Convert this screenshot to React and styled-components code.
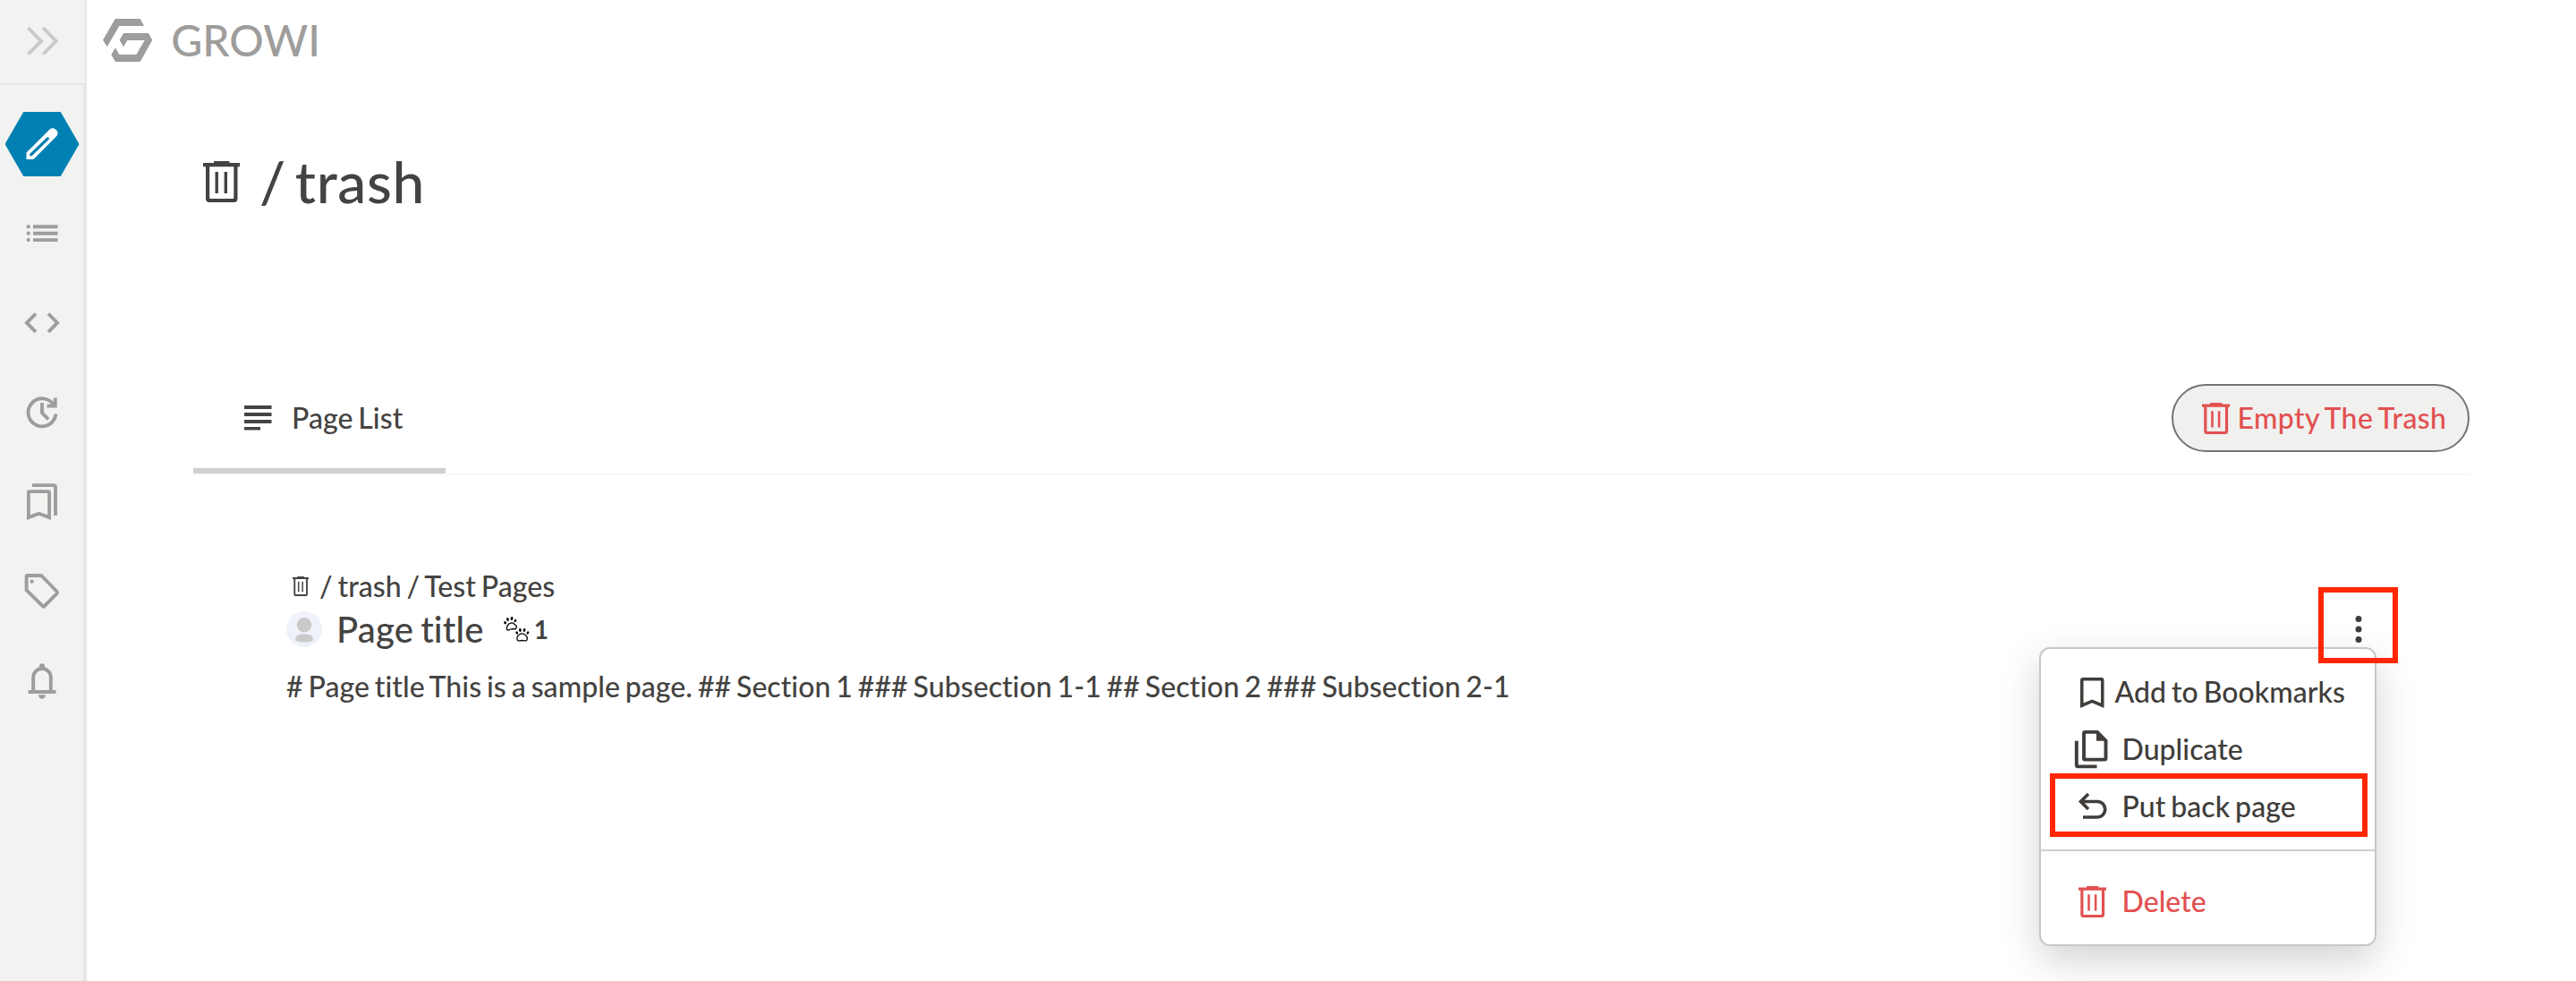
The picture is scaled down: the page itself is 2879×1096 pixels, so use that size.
import React from "react";
import styled, { createGlobalStyle } from "styled-components";

const Global = createGlobalStyle`
  * { box-sizing: border-box; }
  body { margin: 0; background: #fff; }
  svg { display: block; flex: none; }
`;

const ink = "#444341";
const gray = "#9e9d9b";
const danger = "#e25050";

const Shell = styled.div`
  position: relative;
  display: flex;
  height: 1096px;
  overflow: hidden;
  font-family: Lato, "Liberation Sans", sans-serif;
  font-size: 32px;
  font-weight: 500;
  font-variant-ligatures: none;
  line-height: 48px;
  letter-spacing: 0.045px;
  word-spacing: -2.2px;
  color: ${ink};
  white-space: nowrap;
`;

const Sidebar = styled.aside`
  width: 97px;
  display: flex;
  flex-direction: column;
  background: #f2f2f0;
  color: ${gray};
`;

const SidebarToggle = styled.button`
  height: 93px;
  padding: 0 2px 2px 0;
  border: 0;
  border-right: 2px solid #e7e7e5;
  background: transparent;
  display: grid;
  place-items: center;
  color: #c9c9c7;
`;

const SidebarNav = styled.nav`
  flex: 1;
  border-top: 2px solid #e7e7e5;
  border-right: 4px solid #e7e7e5;
  padding-top: 16px;
  display: flex;
  flex-direction: column;
`;

const NavItem = styled.a`
  height: 100px;
  padding-left: 1px;
  display: grid;
  place-items: center;
`;

const Hexagon = styled.span`
  width: 83px;
  height: 72px;
  background: #0080b3;
  clip-path: polygon(25% 0, 75% 0, 100% 50%, 75% 100%, 25% 100%, 0 50%);
  display: grid;
  place-items: center;
  color: #fff;
`;

const Main = styled.main`
  flex: 1;
  display: flex;
  flex-direction: column;
`;

const Brand = styled.header`
  height: 89px;
  padding-left: 18px;
  display: flex;
  align-items: center;
  gap: 21px;
  font-size: 48px;
  color: ${gray};
`;

const Content = styled.div`
  width: 2544px;
  margin-left: 119px;
`;

const Title = styled.h1`
  margin: 69px 0 0;
  height: 90px;
  padding-left: 11px;
  display: flex;
  align-items: center;
  font-size: 64px;
  font-weight: 500;
  letter-spacing: 0.7px;
  line-height: 90px;
`;

const TitlePath = styled.span`
  margin-left: 22px;
  display: flex;
  gap: 10px;
`;

const Tabs = styled.div`
  margin-top: 156px;
  height: 127px;
  border-bottom: 2px solid #f8f8f8;
  display: flex;
  justify-content: space-between;
  align-items: flex-start;
`;

const Tab = styled.div`
  width: 282px;
  height: 125px;
  padding: 7px 0 0 57px;
  border-bottom: 6px solid #cfcfcd;
  display: flex;
  align-items: center;
  gap: 22px;
`;

const EmptyButton = styled.button`
  margin-top: 25px;
  width: 333px;
  height: 76px;
  padding: 0 0 0 32px;
  border: 2px solid #737371;
  border-radius: 38px;
  background: #f0f0ee;
  color: ${danger};
  font: inherit;
  letter-spacing: 0.4px;
  word-spacing: -2.2px;
  display: flex;
  align-items: center;
  gap: 8.5px;
`;

const PageItem = styled.article`
  margin: 100px 0 0 104px;
  width: 2340px;
`;

const Breadcrumb = styled.div`
  height: 48px;
  padding-left: 7px;
  display: flex;
  align-items: center;
  gap: 12px;
`;

const ItemRow = styled.div`
  height: 48px;
  display: flex;
  align-items: center;
`;

const ItemTitle = styled.span`
  margin-left: 16px;
  font-size: 40px;
  letter-spacing: 0.2px;
`;

const Seen = styled.span`
  margin-left: 22px;
  display: flex;
  align-items: center;
  gap: 5px;
  font-size: 28px;
  font-weight: 700;
`;

const MoreButton = styled.button`
  margin-left: auto;
  width: 48px;
  height: 48px;
  padding: 0;
  border: 0;
  background: transparent;
  color: #403d3a;
  display: grid;
  place-items: center;
`;

const Snippet = styled.p`
  margin: 16px 0 0;
`;

const Menu = styled.div`
  position: absolute;
  left: 2279px;
  top: 723px;
  width: 377px;
  height: 334px;
  padding: 16px 0;
  border: 2px solid #c7c7c6;
  border-radius: 12px;
  background: #fff;
  box-shadow: 0 16px 44px rgba(0, 0, 0, 0.175);
  color: #403d3a;
`;

const MenuItem = styled.div`
  height: 64px;
  padding-left: 36px;
  display: flex;
  align-items: center;
  color: ${(p) => (p.$danger ? danger : "inherit")};
`;

const MenuIcon = styled.span`
  width: ${(p) => p.$width || 54.5}px;
  padding-left: ${(p) => p.$inset || 0}px;
  display: flex;
  align-items: center;
`;

const Divider = styled.hr`
  margin: 16px 0 24px;
  border: 0;
  height: 2px;
  background: #cfcfcd;
`;

const Highlight = styled.div`
  position: absolute;
  left: ${(p) => p.$x}px;
  top: ${(p) => p.$y}px;
  width: ${(p) => p.$w}px;
  height: ${(p) => p.$h}px;
  border: 6px solid #ff2600;
`;

const Icon = ({ children, size = 48 }) => (
  <svg width={size} height={size} viewBox="0 0 48 48" fill="none" stroke="currentColor" strokeWidth="3.9">
    {children}
  </svg>
);

const Trash = ({ width, height }) => (
  <svg width={width} height={height} viewBox="0 0 41 46" preserveAspectRatio="none" fill="currentColor">
    <path d="M12 0H29.500V2H41V6.300H38.500V42Q38.500 46 34.500 46H7Q3 46 3 42V6.300H0V2H12ZM7.200 6.300V41Q7.200 41.900 8.100 41.900H33.400Q34.300 41.900 34.300 41V6.300Z" fillRule="evenodd" />
    <path d="M13.500 12H16.900V36H13.500ZM23.600 12H27V36H23.600Z" />
  </svg>
);

const Logo = () => (
  <svg width="55.300" height="48" viewBox="346 63 166 144" fill="currentColor">
    <path d="M387 63H471L484 87H401L360 157L346 134Z" />
    <path d="M415 111H499L512 134L471 207H388L374 183L388 160L401 183H458L486 135H428L415 157L402 134Z" />
  </svg>
);

const Pencil = () => (
  <svg width="36" height="36" viewBox="0 0 36 36" fill="currentColor">
    <path fillRule="evenodd" d="M.500 35V27.500L26.600 1.500Q29.800-1.200 33 1.500L34.300 2.800Q37 5.800 34.300 9L8.500 35ZM4.200 31.200H6.600L26.400 11.900L24.300 9.800L4.200 29Z" />
  </svg>
);

const Paws = () => (
  <svg width="29" height="28" viewBox="0 0 29 28" fill="#000">
    <path d="M3.300 12.600Q4 8 8 7.100Q10.500 6.300 12.300 8.800Q15.600 10.600 13.700 13.200Q12.800 14 10 13.600Q7.500 13.600 5.500 15Q3 15.200 3.300 12.600Z" fill="none" stroke="#000" strokeWidth="1.300" />
    <ellipse cx="1.500" cy="6.700" rx="1.300" ry="1.700" transform="rotate(-25 1.500 6.700)" />
    <ellipse cx="4.400" cy="3" rx="1.400" ry="2" transform="rotate(-12 4.400 3)" />
    <ellipse cx="9" cy="2" rx="1.400" ry="2" transform="rotate(8 9 2)" />
    <ellipse cx="12.900" cy="4.500" rx="1.300" ry="1.800" transform="rotate(28 12.900 4.500)" />
    <path d="M15 25Q14.500 21.500 17.500 20Q20.500 17.800 23.500 20Q26.500 21.500 26.300 25Q26 27.500 23.200 26.800Q20.500 26.200 18 26.800Q15.200 27.300 15 25Z" fill="none" stroke="#000" strokeWidth="1.300" />
    <ellipse cx="14.700" cy="18" rx="1.300" ry="1.700" transform="rotate(-28 14.700 18)" />
    <ellipse cx="18.300" cy="14.900" rx="1.400" ry="2" transform="rotate(-8 18.300 14.900)" />
    <ellipse cx="23" cy="14.900" rx="1.400" ry="2" transform="rotate(10 23 14.900)" />
    <ellipse cx="26.900" cy="18" rx="1.300" ry="1.700" transform="rotate(28 26.900 18)" />
  </svg>
);

const Avatar = () => (
  <svg width="40" height="40" viewBox="0 0 40 40">
    <circle cx="20" cy="20" r="20" fill="#eff3f9" />
    <circle cx="20" cy="15.200" r="8.200" fill="#c9c9c9" />
    <path d="M10 31.500Q10 25.200 20 25.200T30 31.500Q30 34.500 20 34.500T10 31.500Z" fill="#c9c9c9" />
  </svg>
);

const navIcons = [
  <Icon key="list">
    <path d="M14 16.200H41.500M14 23.700H41.500M14 31.100H41.500" />
    <g fill="currentColor" stroke="none">
      <circle cx="8.700" cy="16.200" r="2.100" />
      <circle cx="8.700" cy="23.700" r="2.100" />
      <circle cx="8.700" cy="31.100" r="2.100" />
    </g>
  </Icon>,
  <Icon key="code">
    <path d="M17 13.500L6.900 23.700L17 33.900M31 13.500L41.100 23.700L31 33.900" />
  </Icon>,
  <Icon key="recent">
    <path d="M39.400 25.500A15.500 15.500 0 1 1 37.500 16.200" />
    <path d="M38.800 7.500V16.500H29.500M24 13V24.300L31 31.300" />
  </Icon>,
  <Icon key="bookmarks">
    <path d="M13 5.100H37A2 2 0 0 1 39 7.100V39" />
    <path stroke="none" fill="currentColor" fillRule="evenodd" d="M7 44V13.300Q7 10.300 10 10.300H31Q34 10.300 34 13.300V44L20.500 38.800ZM10.800 38.300L20.500 34.700L30.200 38.300V14.100H10.800Z" />
  </Icon>,
  <Icon key="tag">
    <path strokeLinejoin="round" d="M6.600 7Q6.600 6 7.600 6H23.300L40.700 24Q41.400 25 40.700 26L26.600 40.200Q25.700 41 24.800 40.200L6.600 22.300Z" />
    <circle cx="12.700" cy="12.700" r="2.100" fill="currentColor" stroke="none" />
  </Icon>,
  <Icon key="bell">
    <path d="M8.600 36H39.500M14.200 36V19.800A9.800 9.800 0 0 1 33.800 19.800V36" />
    <path stroke="none" fill="currentColor" d="M21 10V7.300A3 3 0 0 1 27 7.300V10ZM20 39.200H28A4 4.600 0 0 1 20 39.200Z" />
  </Icon>,
];

export default function App() {
  return (
    <Shell>
      <Global />
      <Sidebar>
        <SidebarToggle>
          <Icon>
            <path d="M8.500 9.200L23 23.900L8.500 38.500M25.200 9.200L39.700 23.900L25.200 38.500" />
          </Icon>
        </SidebarToggle>
        <SidebarNav>
          <NavItem>
            <Hexagon><Pencil /></Hexagon>
          </NavItem>
          {navIcons.map((icon) => <NavItem key={icon.key}>{icon}</NavItem>)}
        </SidebarNav>
      </Sidebar>
      <Main>
        <Brand><Logo />GROWI</Brand>
        <Content>
          <Title>
            <Trash width={41} height={46} />
            <TitlePath><span>/</span><span>trash</span></TitlePath>
          </Title>
          <Tabs>
            <Tab>
              <svg width="31" height="28" viewBox="0 0 31 28" fill="currentColor">
                <path d="M0 0H30.500V4H0ZM0 8H30.500V12H0ZM0 16H30.500V20H0ZM0 24H18V27.500H0Z" />
              </svg>
              Page List
            </Tab>
            <EmptyButton><Trash width={31} height={35} />Empty The Trash</EmptyButton>
          </Tabs>
          <PageItem>
            <Breadcrumb><Trash width={18} height={22} />/ trash / Test Pages</Breadcrumb>
            <ItemRow>
              <Avatar />
              <ItemTitle>Page title</ItemTitle>
              <Seen><Paws />1</Seen>
              <MoreButton>
                <svg width="8" height="32" viewBox="0 0 8 32" fill="currentColor">
                  <circle cx="4" cy="4.500" r="3.500" />
                  <circle cx="4" cy="16" r="3.500" />
                  <circle cx="4" cy="27.500" r="3.500" />
                </svg>
              </MoreButton>
            </ItemRow>
            <Snippet># Page title This is a sample page. ## Section 1 ### Subsection 1-1 ## Section 2 ### Subsection 2-1</Snippet>
          </PageItem>
        </Content>
      </Main>
      <Menu>
        <MenuItem>
          <MenuIcon $width={46.5}>
            <svg width="36" height="36" viewBox="0 0 36 36" fill="currentColor">
              <path fillRule="evenodd" d="M8 36V5Q8 2 11 2H31.500Q34.500 2 34.500 5V36L21.200 30.300ZM11.500 30.500L21.200 26.500L31 30.500V5.500H11.500Z" />
            </svg>
          </MenuIcon>
          Add to Bookmarks
        </MenuItem>
        <MenuItem>
          <MenuIcon>
            <svg width="40" height="44" viewBox="0 0 40 44" fill="none" stroke="currentColor" strokeWidth="3.900">
              <path d="M3.800 12.800V39.400Q3.800 41.400 5.800 41.400H26.500" />
              <path d="M12 4.200Q12 2.900 13.300 2.900H27L36.500 12.500V32.300Q36.500 33.600 35.200 33.600H13.300Q12 33.600 12 32.300Z" />
              <path d="M26 2.500V12.700H37L27 2.500Z" fill="currentColor" stroke="none" />
            </svg>
          </MenuIcon>
          Duplicate
        </MenuItem>
        <MenuItem>
          <MenuIcon>
            <svg width="40" height="40" viewBox="0 0 40 40" fill="none" stroke="currentColor" strokeWidth="3.700">
              <path d="M17 6L8.500 14.500L17 23M9 14.500H27A8.700 8.700 0 0 1 27 32H11" />
            </svg>
          </MenuIcon>
          Put back page
        </MenuItem>
        <Divider />
        <MenuItem $danger>
          <MenuIcon $inset={6}>
            <Trash width={31} height={35} />
          </MenuIcon>
          Delete
        </MenuItem>
      </Menu>
      <Highlight $x={2591} $y={656} $w={89} $h={85} />
      <Highlight $x={2291} $y={864} $w={355} $h={71} />
    </Shell>
  );
}
